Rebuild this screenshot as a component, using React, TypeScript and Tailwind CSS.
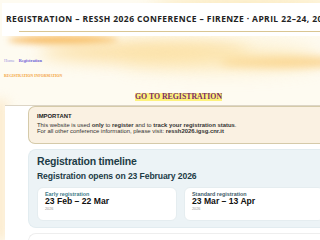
import React from "react";

export default function App() {
  return (
    <div className="relative w-[320px] h-[240px] overflow-hidden bg-[#fefbf1] font-['Liberation_Sans',Arial,sans-serif]">
      {/* background swirls */}
      <div className="absolute inset-0 pointer-events-none">
        <div className="absolute left-[8px] top-[36px] w-[110px] h-[8px] rounded-[50%] bg-[#f5a93c] blur-[3px] opacity-80" />
        <div className="absolute left-[40px] top-[41px] w-[210px] h-[22px] rounded-[50%] bg-[#fbd68a] blur-[8px] opacity-70" />
        <div className="absolute left-[150px] top-[-5px] w-[190px] h-[25px] rounded-[50%] bg-[#fbe3a8] blur-[10px] opacity-70" />
        <div className="absolute left-[220px] top-[57px] w-[130px] h-[10px] rounded-[50%] bg-[#f8c060] blur-[5px] opacity-80" />
        <div className="absolute left-[120px] top-[45px] w-[200px] h-[25px] rounded-[50%] bg-[#fce3a6] blur-[10px] opacity-60" />
        <div className="absolute left-[-10px] top-[100px] w-[18px] h-[140px] bg-[#fbe6c2] blur-[6px] opacity-70" />
      </div>

      <div className="relative">
        {/* header */}
        <div className="mt-[3px] ml-[2px] h-[33px] bg-white flex flex-col">
          <div className="pl-[4px] pt-[10px] h-[28px] whitespace-nowrap text-[8.5px] font-bold text-[#222] tracking-[0.4px] font-['Open_Sans','Liberation_Sans',sans-serif]">
            REGISTRATION – RESSH 2026 CONFERENCE – FIRENZE · APRIL 22–24, 2026
          </div>
          <div className="ml-[17px] h-px bg-[#d9c592]" />
        </div>

        {/* breadcrumb */}
        <div className="mt-[22px] ml-[4px] flex gap-[4px] text-[4.4px] leading-[5px] font-['Liberation_Serif',serif]">
          <span className="text-[#9a93e0]">Home</span>
          <span className="text-[#6c60d6] font-bold">Registration</span>
        </div>

        <div className="mt-[11px] ml-[4px] text-[3.8px] leading-[5px] font-bold text-[#f3a23c] font-['Liberation_Serif',serif]">
          REGISTRATION INFORMATION
        </div>

        <div className="mt-[14px] flex justify-center pl-[37px]">
          <span className="bg-[#fdf27c] text-[#7a2c6c] font-bold text-[7.8px] leading-[8px] font-['Liberation_Serif',serif]">
            GO TO REGISTRATION
          </span>
        </div>

        {/* content */}
        <div className="mt-[4px] ml-[5px] border-t border-[#dcd5c6] bg-white pt-[0px] pl-[23px] h-[200px]">
          <div className="rounded-l-[7px] border border-r-0 border-[#d5caa9] bg-[#faf1e2] pl-[8px] pt-[6px] h-[38px]">
            <div className="text-[5.9px] leading-[7px] font-bold text-[#222]">IMPORTANT</div>
            <div className="mt-[2px] text-[5.9px] leading-[6px] text-[#333]">
              This website is used <b>only</b> to <b>register</b> and to <b>track your registration status</b>.
            </div>
            <div className="text-[5.9px] leading-[6px] text-[#333]">
              For all other conference information, please visit: <b>ressh2026.igsg.cnr.it</b>
            </div>
          </div>

          <div className="mt-[5px] rounded-l-[8px] bg-[#ecf3f6] border border-r-0 border-[#e2ecf0] pl-[8px] pt-[5px] h-[79px]">
            <div className="text-[10.5px] leading-[12px] font-bold text-[#1d3c46] tracking-[-0.2px]">
              Registration timeline
            </div>
            <div className="mt-[5px] text-[8.6px] leading-[9px] font-bold text-[#1d3c46] tracking-[-0.1px]">
              Registration opens on 23 February 2026
            </div>
            <div className="mt-[6px] flex gap-[7px]">
              <div className="w-[140px] h-[34px] shrink-0 rounded-[6px] bg-white border border-[#e5edf0] pl-[7px] pt-[3px]">
                <div className="text-[5.4px] leading-[6px] font-bold text-[#3f7c8a]">Early registration</div>
                <div className="text-[8.6px] leading-[9px] font-bold text-[#111]">23 Feb – 22 Mar</div>
                <div className="mt-[1px] text-[3.8px] leading-[4px] text-[#999]">2026</div>
              </div>
              <div className="w-[140px] h-[34px] shrink-0 rounded-[6px] bg-white border border-[#e5edf0] pl-[7px] pt-[3px]">
                <div className="text-[5.4px] leading-[6px] font-bold text-[#3f5c6a]">Standard registration</div>
                <div className="text-[8.6px] leading-[9px] font-bold text-[#111]">23 Mar – 13 Apr</div>
                <div className="mt-[1px] text-[3.8px] leading-[4px] text-[#999]">2026</div>
              </div>
            </div>
          </div>

          <div className="mt-[5px] rounded-l-[8px] bg-white border border-r-0 border-[#eeeeee] h-[40px]" />
        </div>
      </div>
    </div>
  );
}
